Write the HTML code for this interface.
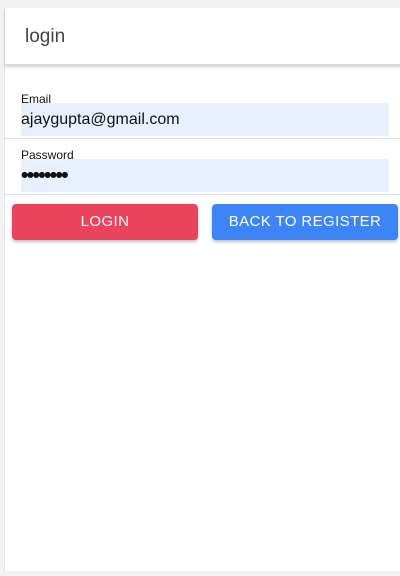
<!DOCTYPE html>
<html><head><meta charset="utf-8"><style>
*{box-sizing:border-box;margin:0;padding:0}
body{width:400px;height:576px;background:#f1f2f2;font-family:"Liberation Sans",Arial,sans-serif;position:relative;overflow:hidden}
.card{position:absolute;left:5px;top:8px;width:400px;height:563px;background:#fff;box-shadow:-1px 0 0 #e4e4e4}
.hdr{position:absolute;left:0;top:0;width:400px;height:57px;background:#fff;box-shadow:0 2px 3px rgba(0,0,0,0.18);border-bottom:1px solid #ddd}
.hdr span{position:absolute;left:20px;top:18px;font-size:19px;color:#444}
.lbl{position:absolute;left:16px;font-size:12px;color:#111;line-height:12px}
.inp{position:absolute;left:16px;width:368px;height:33px;background:#e8f0fe;font-size:16px;color:#111;line-height:33px;overflow:hidden}
.line{position:absolute;left:0;width:400px;height:1px;background:#ddd}
.btn{position:absolute;top:196px;height:36px;border-radius:4px;color:#fff;font-size:15px;letter-spacing:.4px;text-align:center;line-height:36px;box-shadow:0 2px 3px rgba(0,0,0,0.25)}
</style></head><body>
<div class="card">
<div class="hdr"><span>login</span></div>
<div class="lbl" style="top:85px">Email</div>
<div class="inp" style="top:95px;line-height:33px">ajaygupta@gmail.com</div>
<div class="line" style="top:130px"></div>
<div class="lbl" style="top:141px">Password</div>
<div class="inp" style="top:151px;font-size:21px;letter-spacing:-1.6px;line-height:34px;font-weight:bold">••••••••</div>
<div class="line" style="top:186px"></div>
<div class="btn" style="left:7px;width:186px;background:#e9435e">LOGIN</div>
<div class="btn" style="left:207px;width:186px;background:#3d85f6">BACK TO REGISTER</div>
</div>
</body></html>
